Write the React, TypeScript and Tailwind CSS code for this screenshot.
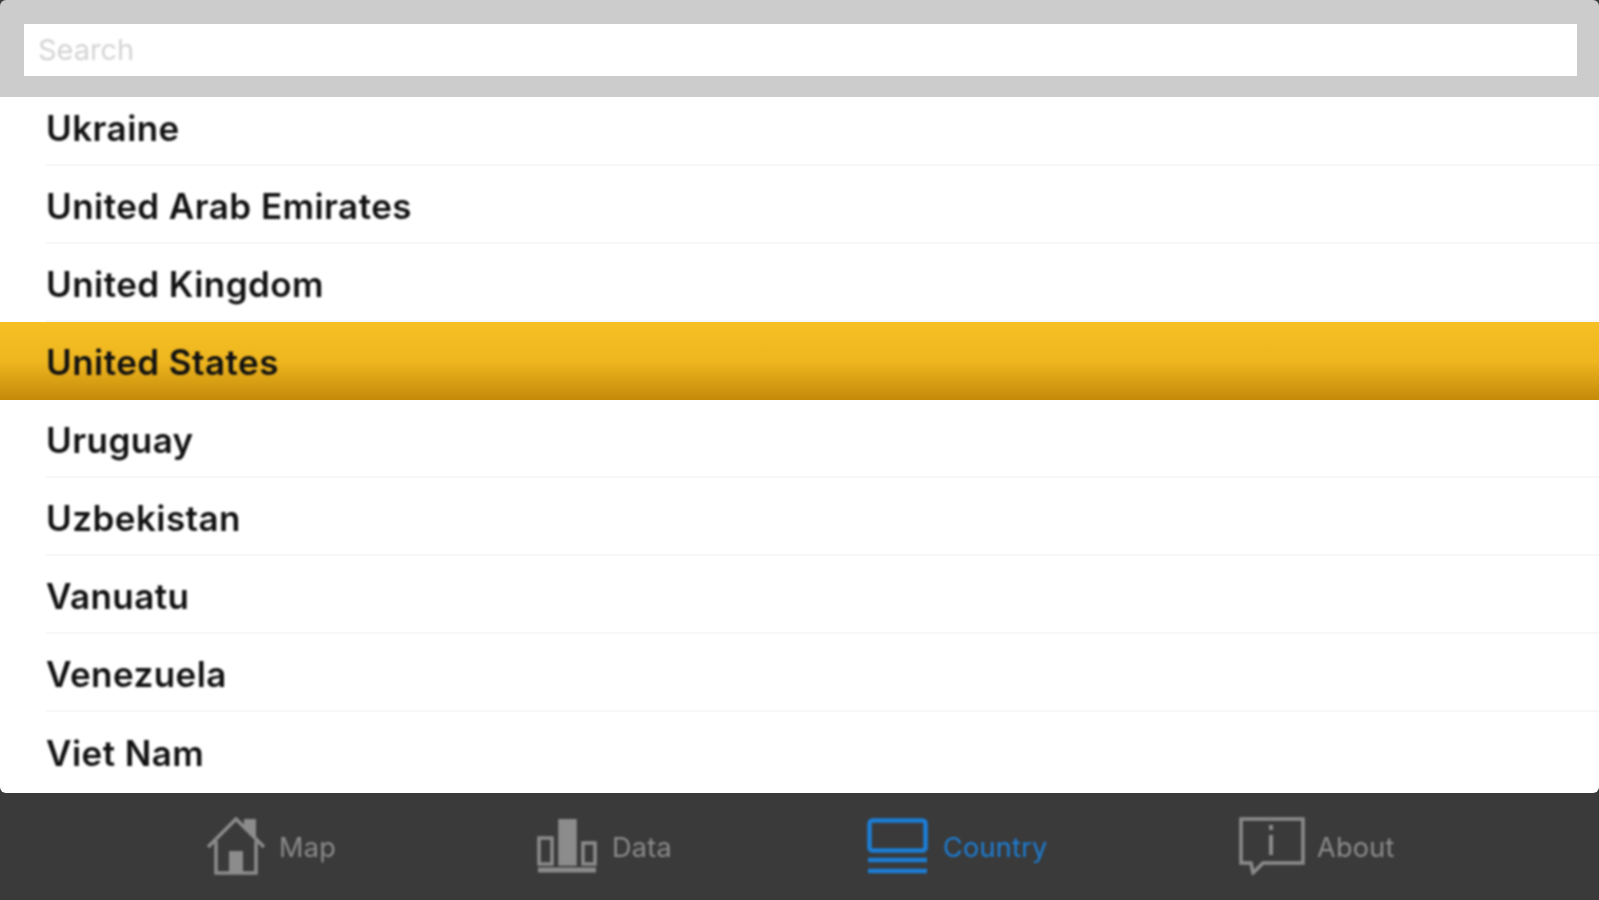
import React from "react";

const before = ["United Arab Emirates", "United Kingdom"];
const after = ["Uruguay", "Uzbekistan", "Vanuatu", "Venezuela", "Viet Nam"];

function Row({ name, last }: { name: string; last?: boolean }) {
  return (
    <div className="h-[78px] shrink-0 pl-[46px] flex">
      <div className={`flex-1 flex items-center pt-[5px] ${last ? "" : "border-b-2 border-[#f7f7f7]"}`}>
        <span className="blur-[0.8px]">{name}</span>
      </div>
    </div>
  );
}

function Home() {
  return (
    <svg width="58" height="58" viewBox="0 0 58 58" fill="none" stroke="#8c8c8c" strokeWidth="3.5" className="blur-[0.8px]">
      <path d="M1 30 L29 2 L57 30" />
      <path d="M9 24 V56 H49 V24" />
      <rect x="22" y="34" width="14" height="22" fill="#8c8c8c" stroke="none" />
      <path d="M37 9 V2 H49 V22" fill="#8c8c8c" stroke="none" />
    </svg>
  );
}

function Bars() {
  return (
    <svg width="60" height="54" viewBox="0 0 60 54" fill="none" stroke="#8c8c8c" strokeWidth="3.5" className="blur-[0.8px]">
      <rect x="2" y="19" width="13" height="26" />
      <rect x="23" y="1" width="15" height="44" fill="#8c8c8c" />
      <rect x="46" y="24" width="12" height="21" />
      <path d="M1 51 H59" strokeWidth="5" />
    </svg>
  );
}

function Lines() {
  return (
    <svg width="61" height="56" viewBox="0 0 61 56" fill="none" stroke="#1c7ed6" strokeWidth="4.5" className="blur-[0.8px]">
      <rect x="2.5" y="2.5" width="56" height="30" rx="3" />
      <path d="M1 42 H60" />
      <path d="M1 53 H60" />
    </svg>
  );
}

function Info() {
  return (
    <svg width="66" height="58" viewBox="0 0 66 58" fill="none" stroke="#8c8c8c" strokeWidth="3.5" className="blur-[0.8px]">
      <path d="M2 2 H64 V46 H24 L14 56 L12 46 H2 Z" />
      <path d="M32 8 V13" strokeWidth="4" />
      <path d="M32 18 V38" strokeWidth="4" />
    </svg>
  );
}

function Tab({ icon, label, width, active, gap }: { icon: React.ReactNode; label: string; width: string; active?: boolean; gap: string }) {
  return (
    <div className={`${width} flex items-center ${gap}`}>
      {icon}
      <span className={`text-[27px] tracking-[0.3px] pt-[5px] blur-[0.9px] ${active ? "text-[#1c7ed6]" : "text-[#8c8c8c]"}`}>{label}</span>
    </div>
  );
}

export default function App() {
  return (
    <div className="w-[1599px] h-[900px] overflow-hidden flex flex-col bg-[#3a3a3a] font-['Inter','Liberation_Sans',sans-serif]">
      <div className="h-[97px] shrink-0 bg-[#cccccc] pl-[24px] pr-[22px] pt-[24px] rounded-t-[6px]">
        <div className="h-[52px] bg-white flex items-center pl-[14px] text-[29px] text-[#d4d4d4]">
          <span className="blur-[0.8px]">Search</span>
        </div>
      </div>
      <div className="h-[696px] shrink-0 bg-white overflow-hidden flex flex-col text-[35px] tracking-[0.45px] font-semibold text-[#111111] rounded-b-[6px]">
        <div className="h-[69px] shrink-0 flex flex-col justify-end">
          <Row name="Ukraine" />
        </div>
        {before.map((c) => (
          <Row key={c} name={c} />
        ))}
        <div className="h-[78px] shrink-0 pl-[46px] pt-[2px] flex items-center bg-gradient-to-b from-[#f6c024] via-[#efb61f] to-[#c48a08]">
          <span className="blur-[0.8px]">United States</span>
        </div>
        {after.map((c, i) => (
          <Row key={c} name={c} last={i === after.length - 1} />
        ))}
      </div>
      <div className="flex-1 flex items-center pl-[207px] pb-[2px]">
        <Tab icon={<Home />} label="Map" width="w-[330px]" gap="gap-[14px]" />
        <Tab icon={<Bars />} label="Data" width="w-[330px]" gap="gap-[15px]" />
        <Tab icon={<Lines />} label="Country" width="w-[372px]" gap="gap-[15px]" active />
        <Tab icon={<Info />} label="About" width="w-[160px]" gap="gap-[12px]" />
      </div>
    </div>
  );
}
